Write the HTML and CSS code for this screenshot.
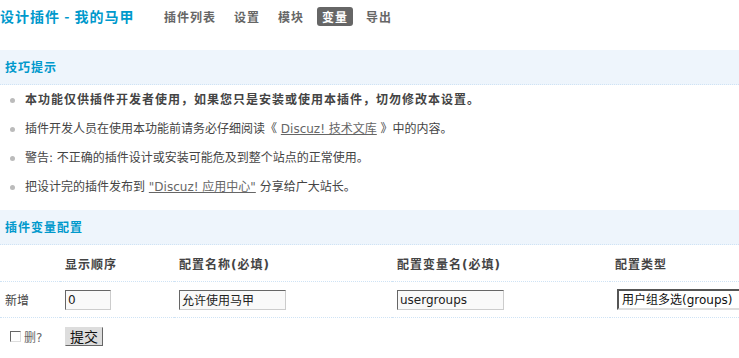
FILE: index.html
```html
<!DOCTYPE html>
<html lang="zh-CN">
<head>
    <meta charset="UTF-8">
    <title>设计插件 - 我的马甲</title>
    <link rel="stylesheet" href="styles.css">
</head>
<body>
    <div class="header">
        <h1 class="title">设计插件 - 我的马甲</h1>
        <ul class="nav">
            <li><a href="#">插件列表</a></li>
            <li><a href="#">设置</a></li>
            <li><a href="#">模块</a></li>
            <li class="current"><a href="#">变量</a></li>
            <li><a href="#">导出</a></li>
        </ul>
    </div>

    <div class="th">技巧提示</div>
    <ul class="tips">
        <li class="strong">本功能仅供插件开发者使用，如果您只是安装或使用本插件，切勿修改本设置。</li>
        <li>插件开发人员在使用本功能前请务必仔细阅读《 <a href="#">Discuz! 技术文库</a> 》中的内容。</li>
        <li>警告: 不正确的插件设计或安装可能危及到整个站点的正常使用。</li>
        <li>把设计完的插件发布到 <a href="#">"Discuz! 应用中心"</a> 分享给广大站长。</li>
    </ul>

    <div class="th">插件变量配置</div>
    <form class="wrap">
    <table class="vars">
        <tr class="head">
            <td class="c1"></td>
            <td class="c2">显示顺序</td>
            <td class="c3">配置名称(必填)</td>
            <td class="c4">配置变量名(必填)</td>
            <td class="c5">配置类型</td>
        </tr>
        <tr class="line">
            <td>新增</td>
            <td><input class="txt short" type="text" value="0"></td>
            <td><input class="txt" type="text" value="允许使用马甲"></td>
            <td><input class="txt" type="text" value="usergroups"></td>
            <td><select class="sel"><option>用户组多选(groups)</option></select></td>
        </tr>
        <tr class="foot">
            <td><label class="del"><input type="checkbox" class="chk"> 删?</label></td>
            <td colspan="4"><button type="button" class="btn">提交</button></td>
        </tr>
    </table>
    </form>
</body>
</html>
```

FILE: styles.css
```css
html {
    overflow: hidden;
}
body {
    margin: 0;
    font: 12px "DejaVu Sans", "Noto Sans CJK SC", sans-serif;
    color: #333;
    background: #fff;
}
a {
    color: #666;
}

.header {
    display: flex;
    align-items: center;
    height: 32px;
    margin-bottom: 18px;
}
.title {
    margin: 0;
    width: 136px;
    font-size: 14px;
    font-weight: bold;
    letter-spacing: 1px;
    color: #09c;
    white-space: nowrap;
    font-family: "Noto Sans CJK SC", sans-serif;
}
.nav {
    display: flex;
    list-style: none;
    margin: 0 0 0 23px;
    padding: 0;
    gap: 8px;
}
.nav a {
    display: block;
    padding: 0 5px;
    line-height: 19px;
    border-radius: 3px;
    font-weight: bold;
    letter-spacing: 1px;
    color: #666;
    text-decoration: none;
    font-family: "Noto Sans CJK SC", sans-serif;
}
.nav .current a {
    background: #666;
    color: #fff;
}

.th {
    height: 34px;
    line-height: 34px;
    padding-left: 5px;
    background: #eef5fc;
    border-bottom: 1px dotted #cfe3f5;
    color: #09c;
    font-weight: bold;
    letter-spacing: 1px;
    font-family: "Noto Sans CJK SC", sans-serif;
}

.tips {
    list-style: none;
    margin: 0;
    padding: 1px 0 8px;
}
.tips li {
    position: relative;
    line-height: 29px;
    padding-left: 25px;
    color: #444;
}
.tips li::before {
    content: "";
    position: absolute;
    left: 10px;
    top: 12px;
    width: 5px;
    height: 5px;
    border-radius: 50%;
    background: #bbb;
}
.tips .strong {
    font-weight: bold;
    letter-spacing: 1px;
}

.wrap {
    overflow: hidden;
}
.vars {
    border-collapse: collapse;
    width: 739px;
    table-layout: fixed;
}
.vars td {
    padding: 0 5px;
    height: 35px;
    color: #444;
    white-space: nowrap;
    overflow: hidden;
}
.vars .c1 { width: 50px; }
.vars .c2 { width: 104px; }
.vars .c3 { width: 208px; }
.vars .c4 { width: 208px; }
.vars .c5 { padding-right: 0; }
.head td {
    font-weight: bold;
    letter-spacing: 1px;
    border-bottom: 1px dotted #cfe3f5;
    padding-top: 1px;
}
.line td {
    border-bottom: 1px dotted #cfe3f5;
}
.foot td {
    height: 36px;
}

.txt {
    box-sizing: border-box;
    width: 107px;
    height: 20px;
    padding: 0 2px;
    border: 1px solid;
    border-color: #666 #ccc #ccc #666;
    background: #f9f9f9;
    font: 12px "DejaVu Sans", "Noto Sans CJK SC", sans-serif;
    color: #222;
}
.txt.short {
    width: 46px;
}
.sel {
    box-sizing: border-box;
    margin-left: 2px;
    width: 140px;
    height: 21px;
    padding: 0 3px;
    border: 2px solid;
    border-color: #555 #ddd #ddd #555;
    background: #fff;
    font: 12px "DejaVu Sans", "Noto Sans CJK SC", sans-serif;
    color: #111;
    appearance: none;
    border-radius: 0;
}

.del {
    display: flex;
    align-items: center;
    gap: 3px;
    padding-left: 5px;
    color: #666;
}
.chk {
    appearance: none;
    margin: 0;
    width: 11px;
    height: 11px;
    border: 1px solid;
    border-color: #666 #ddd #ddd #666;
    background: #fff;
}
.btn {
    height: 19px;
    padding: 0 4px;
    border: 1px solid;
    border-color: #ddd #666 #666 #ddd;
    background: #ddd;
    font: 14px "Noto Sans CJK SC", sans-serif;
    line-height: 16px;
    color: #111;
}
```
